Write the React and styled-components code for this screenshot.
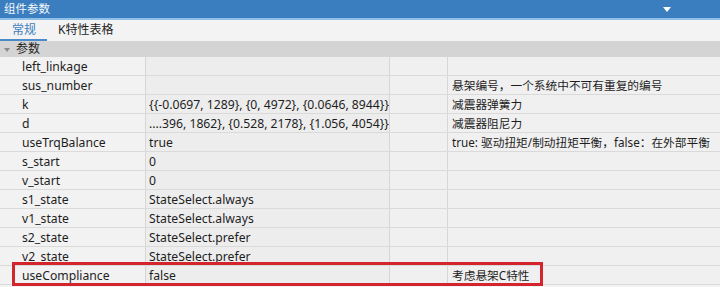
import React from "react"
import styled, { createGlobalStyle } from 'styled-components';

const GlobalStyle = createGlobalStyle`
  html, body { margin: 0; padding: 0; background: #f2f2f2; }
  body { font-family: "Noto Sans", "Noto Sans CJK SC", sans-serif; font-size: 12px; color: #1e1e1e; }
`;

const rows = [
  { name: 'left_linkage', value: '', desc: '' },
  { name: 'sus_number', value: '', desc: '悬架编号，一个系统中不可有重复的编号' },
  { name: 'k', value: '{{-0.0697, 1289}, {0, 4972}, {0.0646, 8944}}', desc: '减震器弹簧力' },
  { name: 'd', value: '....396, 1862}, {0.528, 2178}, {1.056, 4054}}', desc: '减震器阻尼力' },
  { name: 'useTrqBalance', value: 'true', desc: 'true: 驱动扭矩/制动扭矩平衡，false：在外部平衡' },
  { name: 's_start', value: '0', desc: '' },
  { name: 'v_start', value: '0', desc: '' },
  { name: 's1_state', value: 'StateSelect.always', desc: '' },
  { name: 'v1_state', value: 'StateSelect.always', desc: '' },
  { name: 's2_state', value: 'StateSelect.prefer', desc: '' },
  { name: 'v2_state', value: 'StateSelect.prefer', desc: '' },
  { name: 'useCompliance', value: 'false', desc: '考虑悬架C特性', marked: true },
];

export default function App() {
  return (
    <>
      <GlobalStyle />
      <Panel>
        <TitleBar>
          <Title>组件参数</Title>
          <DropArrow />
        </TitleBar>
        <TabBar>
          <Tab active>常规</Tab>
          <Tab>K特性表格</Tab>
        </TabBar>
        <GroupRow>
          <GroupArrow />
          <span>参数</span>
        </GroupRow>
        {rows.map((r) => (
          <Row key={r.name}>
            <NameCell>{r.name}</NameCell>
            <ValueCell>{r.value}</ValueCell>
            <Cell />
            <DescCell>{r.desc}</DescCell>
            {r.marked && <Marker />}
          </Row>
        ))}
      </Panel>
    </>
  );
}

const Panel = styled.div`
  width: 720px;
  height: 287px;
  overflow: hidden;
  display: flex;
  flex-direction: column;
  background: #f2f2f2;
`;

const TitleBar = styled.div`
  height: 18px;
  background: #3b7ec0;
  border-bottom: 2px solid #8ec0e8;
  display: flex;
  align-items: center;
  justify-content: space-between;
  padding: 0 0 0 4px;
  color: #ffffff;
`;

const Title = styled.div`
  font-size: 11.5px;
  line-height: 18px;
  opacity: 0.95;
`;

const DropArrow = styled.div`
  width: 0;
  height: 0;
  border-left: 4px solid transparent;
  border-right: 4px solid transparent;
  border-top: 5px solid #ffffff;
  margin-right: 49px;
`;

const TabBar = styled.div`
  height: 21px;
  display: flex;
  background: #f3f3f3;
`;

const Tab = styled.div`
  width: ${p => (p.active ? '47px' : 'auto')};
  padding: 0 0 0 ${p => (p.active ? '12px' : '11px')};
  box-sizing: border-box;
  font-size: 12px;
  line-height: 19px;
  color: ${p => (p.active ? '#3b7ec0' : '#1e1e1e')};
  border-bottom: 2px solid ${p => (p.active ? '#4a8bc9' : 'transparent')};
`;

const GroupRow = styled.div`
  height: 16px;
  background: #d4d4d4;
  display: flex;
  align-items: center;
  gap: 6px;
  padding-left: 4px;
  font-size: 12px;
  line-height: 16px;
`;

const GroupArrow = styled.div`
  width: 0;
  height: 0;
  border-left: 3px solid transparent;
  border-right: 3px solid transparent;
  border-top: 4px solid #8a8a8a;
  margin-top: 1px;
`;

const Row = styled.div`
  position: relative;
  height: 19px;
  display: grid;
  grid-template-columns: 146px 244px 58px 1fr;
  border-bottom: 1px solid #dadada;
  box-sizing: border-box;
  line-height: 19px;
  font-size: 12.2px;
`;

const Cell = styled.div`
  border-right: 1px solid #d6d6d6;
  background: #f0f0f0;
  white-space: nowrap;
  overflow: hidden;
`;

const NameCell = styled(Cell)`
  padding-left: 22px;
  background: #f2f2f2;
`;

const ValueCell = styled(Cell)`
  padding-left: 3px;
  background: #ededed;
`;

const DescCell = styled(Cell)`
  padding-left: 4px;
  border-right: none;
  font-size: 11.7px;
`;

const Marker = styled.div`
  position: absolute;
  left: 12px;
  top: -4px;
  width: 531px;
  height: 24px;
  border: 3px solid #d3252b;
  box-sizing: border-box;
  pointer-events: none;
`;
